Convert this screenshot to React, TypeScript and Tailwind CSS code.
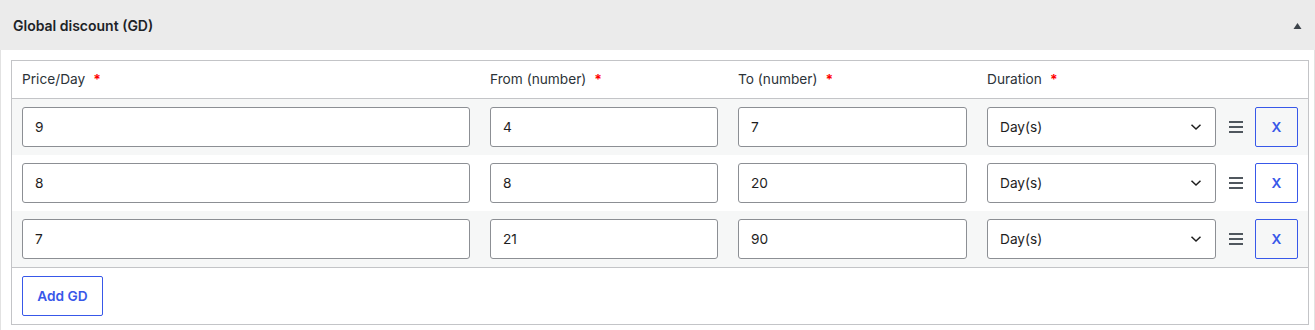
import React from "react";

const rows = [
  { price: "9", from: "4", to: "7", bg: "bg-[#f6f7f7]" },
  { price: "8", from: "8", to: "20", bg: "bg-white" },
  { price: "7", from: "21", to: "90", bg: "bg-[#f6f7f7]" },
];

function Star() {
  return <span className="ml-[8px] font-bold text-[#ff0000]">*</span>;
}

function Input({ value, w }: { value: string; w: string }) {
  return (
    <div
      className={`${w} h-[40px] shrink-0 rounded-[3px] border border-[#8c8f94] bg-white pl-[12px] flex items-center text-[13.7px] text-[#1e1e1e]`}
    >
      {value}
    </div>
  );
}

function Select() {
  return (
    <div className="w-[229px] h-[40px] shrink-0 rounded-[3px] border border-[#8c8f94] bg-white pl-[12px] pr-[13px] flex items-center justify-between text-[13.7px] text-[#1e1e1e]">
      <span>Day(s)</span>
      <svg width="12" height="8" viewBox="0 0 12 8" fill="none">
        <path d="M1.5 1.8 L6 6 L10.5 1.8" stroke="#1e1e1e" strokeWidth="1.5" />
      </svg>
    </div>
  );
}

function Handle() {
  return (
    <div className="flex-1 flex justify-center">
      <div className="flex flex-col gap-[3px] w-[14px]">
        <div className="h-[2px] bg-[#50575e]" />
        <div className="h-[2px] bg-[#50575e]" />
        <div className="h-[2px] bg-[#50575e]" />
      </div>
    </div>
  );
}

export default function App() {
  return (
    <div className="w-[1315px] h-[330px] bg-white font-['Inter','Liberation_Sans',sans-serif] text-[13.7px] text-[#1e1e1e] overflow-hidden">
      <div className="h-[50px] bg-[#ebebeb] flex items-center justify-between pl-[13px] pr-[13px]">
        <span className="text-[14px] font-semibold text-[#1d2327] mt-[1px]">Global discount (GD)</span>
        <svg width="9" height="8" viewBox="0 0 9 8" className="mt-[1px]">
          <path d="M4.5 1 L8.5 7 L0.5 7 Z" fill="#3c434a" />
        </svg>
      </div>
      <div className="h-[280px] border-l border-r border-[#e2e2e2] pt-[10px] pl-[10px]">
        <div className="w-[1298px] border border-[#c3c4c7]">
          <div className="h-[38px] flex items-center px-[10px] border-b border-[#c3c4c7] text-[#2c3338]">
            <div className="w-[448px] shrink-0">Price/Day<Star /></div>
            <div className="w-[228px] shrink-0 ml-[20px]">From (number)<Star /></div>
            <div className="w-[229px] shrink-0 ml-[20px]">To (number)<Star /></div>
            <div className="w-[229px] shrink-0 ml-[20px]">Duration<Star /></div>
          </div>
          {rows.map((r, i) => (
            <div key={i} className={`h-[56px] flex items-center px-[10px] ${r.bg}`}>
              <Input value={r.price} w="w-[448px]" />
              <div className="ml-[20px]"><Input value={r.from} w="w-[228px]" /></div>
              <div className="ml-[20px]"><Input value={r.to} w="w-[229px]" /></div>
              <div className="ml-[20px]"><Select /></div>
              <Handle />
              <button className="w-[43px] h-[40px] shrink-0 rounded-[2px] border border-[#3858e9] text-[#3858e9] font-semibold text-[13.7px] bg-transparent">
                X
              </button>
            </div>
          ))}
          <div className="h-[57px] border-t border-[#c3c4c7] px-[10px] pt-[8px]">
            <button className="w-[81px] h-[40px] rounded-[2px] border border-[#3858e9] text-[#3858e9] font-semibold text-[13.7px] bg-white">
              Add GD
            </button>
          </div>
        </div>
      </div>
    </div>
  );
}
